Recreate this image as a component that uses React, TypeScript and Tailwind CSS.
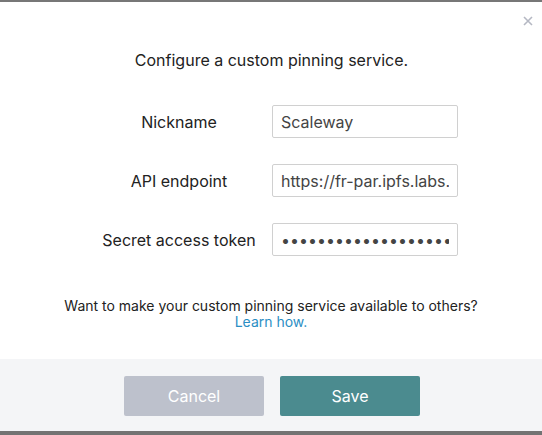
import React from "react";

const fields = [
    { label: "Nickname", value: "Scaleway", type: "text" },
    { label: "API endpoint", value: "https://fr-par.ipfs.labs.scaleway.com", type: "text" },
    { label: "Secret access token", value: "secrettokenvalue1234567890", type: "password" },
];

export default function App() {
    return (
        <div
            className="w-[542px] h-[435px] flex flex-col bg-white text-[#222] overflow-hidden"
            style={{ fontFamily: "Inter, 'Noto Sans', sans-serif" }}
        >
            <div className="h-[2px] bg-[#777]" />
            <div className="relative flex-1 flex flex-col">
                <button className="absolute top-[12px] right-[7px] p-0.5 text-[#b5b8c3]" title="Close">
                    <svg width="10" height="10" viewBox="0 0 10 10" stroke="currentColor" strokeWidth="1.6">
                        <path d="M1 1 L9 9 M9 1 L1 9" />
                    </svg>
                </button>

                <h2 className="mt-[48px] h-[20px] leading-[20px] text-center text-[16px] pl-px">
                    Configure a custom pinning service.
                </h2>

                <div className="mt-[35px] flex flex-col gap-[26px] pl-[94px]">
                    {fields.map((f) => (
                        <div key={f.label} className="flex items-center gap-2 h-[33px]">
                            <label className="w-[170px] text-center text-[16px]">{f.label}</label>
                            <input
                                type={f.type}
                                defaultValue={f.value}
                                className="w-[186px] h-[33px] px-2 border border-[#d0d0d0] rounded-[2px] text-[16px] text-[#444] outline-none"
                                style={{ fontFamily: "Inter, 'Noto Sans', sans-serif" }}
                            />
                        </div>
                    ))}
                </div>

                <p className="mt-[42px] text-center text-[14px] leading-[16px]">
                    Want to make your custom pinning service available to others?
                    <br />
                    <a className="text-[#2b8ec4]">Learn how.</a>
                </p>

                <div className="mt-auto h-[72px] bg-[#f4f5f7] flex justify-center gap-4 pt-[17px] pl-[2px]">
                    <button className="w-[140px] h-[40px] rounded-[2px] bg-[#bdc1cc] text-white text-[16px]">
                        Cancel
                    </button>
                    <button className="w-[140px] h-[40px] rounded-[2px] bg-[#4b8b8f] text-white text-[16px]">
                        Save
                    </button>
                </div>
            </div>
            <div className="h-[4px] bg-[#737373]" />
        </div>
    );
}
